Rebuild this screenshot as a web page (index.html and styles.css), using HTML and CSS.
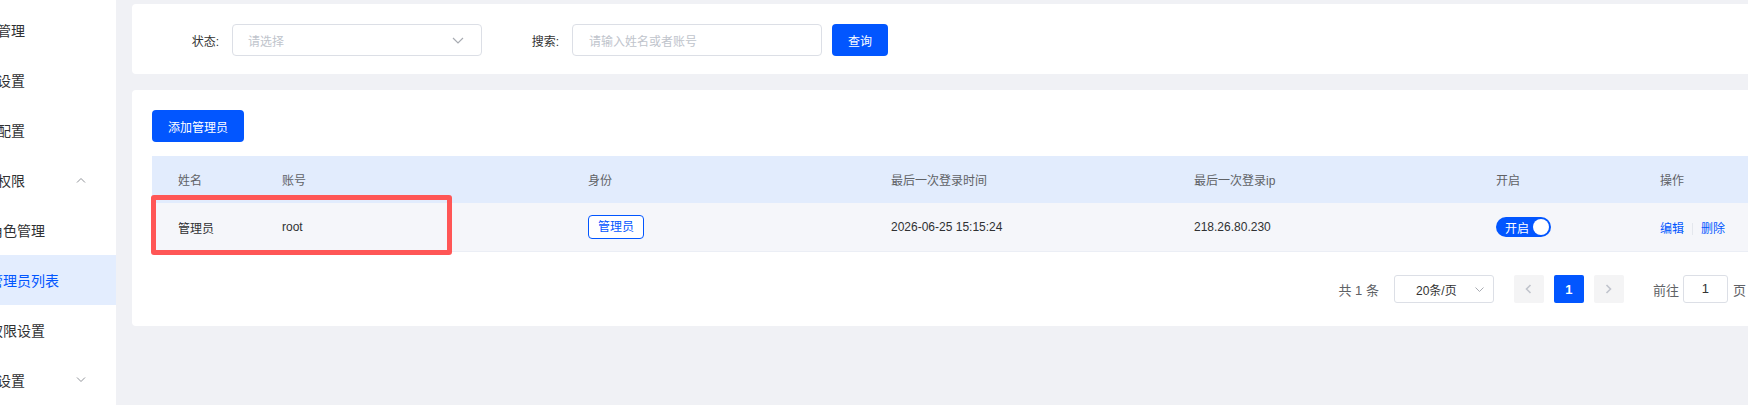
FILE: index.html
```html
<!DOCTYPE html>
<html lang="zh-CN">
<head>
  <meta charset="UTF-8" />
  <meta name="viewport" content="width=device-width, initial-scale=1.0"/>
  <title>管理员列表</title>
  <link rel="stylesheet" href="styles.css">
</head>
<body>
  <div class="layout">
    <aside class="sidebar">
      <ul class="menu">
        <li class="menu-item">会员管理</li>
        <li class="menu-item">系统设置</li>
        <li class="menu-item">支付配置</li>
        <li class="menu-item">
          <span>管理权限</span>
          <svg class="arrow" width="10" height="6" viewBox="0 0 10 6"><polyline points="1,5.5 5,1.5 9,5.5" fill="none" stroke="#909399" stroke-width="1"/></svg>
        </li>
        <li class="menu-item sub">角色管理</li>
        <li class="menu-item sub active">管理员列表</li>
        <li class="menu-item sub">权限设置</li>
        <li class="menu-item">
          <span>基础设置</span>
          <svg class="arrow" width="10" height="6" viewBox="0 0 10 6"><polyline points="1,0.5 5,4.5 9,0.5" fill="none" stroke="#909399" stroke-width="1"/></svg>
        </li>
      </ul>
    </aside>

    <main class="main">
      <!-- 搜索条件 -->
      <div class="card search-card">
        <div class="form-item">
          <label>状态:</label>
          <div class="select">
            <span class="placeholder">请选择</span>
            <svg width="12" height="7" viewBox="0 0 12 7"><polyline points="1,1 6,6 11,1" fill="none" stroke="#a8abb2" stroke-width="1.2"/></svg>
          </div>
        </div>
        <div class="form-item">
          <label>搜索:</label>
          <div class="input"><span class="placeholder">请输入姓名或者账号</span></div>
        </div>
        <button class="btn">查询</button>
      </div>

      <!-- 管理员列表 -->
      <div class="card list-card">
        <button class="btn">添加管理员</button>

        <div class="table-wrap">
          <table class="table">
            <colgroup>
              <col style="width: 104px">
              <col style="width: 306px">
              <col style="width: 303px">
              <col style="width: 303px">
              <col style="width: 302px">
              <col style="width: 164px">
              <col>
            </colgroup>
            <thead>
              <tr>
                <th>姓名</th>
                <th>账号</th>
                <th>身份</th>
                <th>最后一次登录时间</th>
                <th>最后一次登录ip</th>
                <th>开启</th>
                <th>操作</th>
              </tr>
            </thead>
            <tbody>
              <tr>
                <td>管理员</td>
                <td>root</td>
                <td><span class="tag">管理员</span></td>
                <td>2026-06-25 15:15:24</td>
                <td>218.26.80.230</td>
                <td><span class="switch">开启<i class="knob"></i></span></td>
                <td class="actions"><a>编辑</a><span class="divider"></span><a>删除</a></td>
              </tr>
            </tbody>
          </table>
          <div class="highlight"></div>
        </div>

        <div class="pagination">
          <span class="total">共 1 条</span>
          <div class="page-size">
            <span>20条/页</span>
            <svg width="9" height="5" viewBox="0 0 9 5"><polyline points="0.5,0.5 4.5,4.5 8.5,0.5" fill="none" stroke="#a8abb2" stroke-width="1"/></svg>
          </div>
          <span class="page-btn">
            <svg width="7" height="10" viewBox="0 0 7 10"><polyline points="5.5,1 1.5,5 5.5,9" fill="none" stroke="#c0c4cc" stroke-width="1.6"/></svg>
          </span>
          <span class="page-num">1</span>
          <span class="page-btn">
            <svg width="7" height="10" viewBox="0 0 7 10"><polyline points="1.5,1 5.5,5 1.5,9" fill="none" stroke="#c0c4cc" stroke-width="1.6"/></svg>
          </span>
          <span class="jump">前往</span>
          <span class="jump-input">1</span>
          <span class="jump-unit">页</span>
        </div>
      </div>
    </main>
  </div>
</body>
</html>
```

FILE: styles.css
```css
body {
  font-family: 'Liberation Sans', 'Noto Sans CJK SC', sans-serif;
  background: #f0f1f5;
  margin: 0;
  padding: 0;
  color: #333;
}
.layout {
  display: flex;
  height: 100vh;
  overflow: hidden;
}
.sidebar {
  flex: none;
  width: 116px;
  background: #fff;
  overflow: hidden;
}
.menu {
  list-style: none;
  margin: 5px 0 0 -51px;
  padding: 0;
  width: 167px;
}
.menu-item {
  display: flex;
  align-items: center;
  justify-content: space-between;
  height: 50px;
  padding: 0 30px 0 20px;
  font-size: 14px;
  color: #303133;
  white-space: nowrap;
}
.menu-item.sub {
  padding-left: 40px;
}
.menu-item.active {
  background: #e3edfe;
  color: #0256ff;
}
.main {
  flex: none;
  width: 1636px;
  margin-left: 16px;
  padding-top: 4px;
}
.card {
  background: #fff;
  border-radius: 4px;
  padding: 20px;
}
.search-card {
  display: flex;
  align-items: center;
  padding-bottom: 18px;
  margin-bottom: 16px;
}
.form-item {
  display: flex;
  align-items: center;
  margin-right: 10px;
}
.form-item label {
  width: 80px;
  padding-right: 13px;
  box-sizing: border-box;
  text-align: right;
  font-size: 12px;
  color: #333;
}
.select, .input {
  display: flex;
  align-items: center;
  justify-content: space-between;
  width: 250px;
  height: 32px;
  box-sizing: border-box;
  border: 1px solid #dcdfe6;
  border-radius: 4px;
  padding: 0 17px 0 15px;
  font-size: 12px;
}
.input {
  padding-left: 16px;
}
.placeholder {
  color: #c0c4cc;
}
.btn {
  height: 32px;
  padding: 0 16px;
  background: #0256ff;
  color: #fff;
  border: none;
  border-radius: 4px;
  font-family: inherit;
  font-size: 12px;
  cursor: pointer;
}
.list-card {
  padding-bottom: 23px;
}
.table-wrap {
  position: relative;
  margin-top: 14px;
}
.table {
  width: 100%;
  border-collapse: collapse;
  table-layout: fixed;
  font-size: 12px;
}
.table th {
  height: 47px;
  padding: 0 0 0 26px;
  background: #e2ecfd;
  color: #606266;
  font-weight: normal;
  text-align: left;
}
.table td {
  height: 48px;
  padding: 0 0 0 26px;
  background: #f5f6fa;
  border-bottom: 1px solid #ebeef5;
  color: #303133;
}
.tag {
  display: inline-block;
  height: 24px;
  line-height: 22px;
  box-sizing: border-box;
  padding: 0 9px;
  border: 1px solid #0256ff;
  border-radius: 4px;
  background: #fff;
  color: #0256ff;
  vertical-align: middle;
}
.switch {
  display: inline-flex;
  align-items: center;
  justify-content: space-between;
  width: 55px;
  height: 20px;
  box-sizing: border-box;
  padding: 0 2px 0 9px;
  border-radius: 10px;
  background: #0256ff;
  color: #fff;
  vertical-align: middle;
}
.knob {
  width: 16px;
  height: 16px;
  border-radius: 50%;
  background: #fff;
}
.actions {
  white-space: nowrap;
}
.actions a {
  color: #0256ff;
  cursor: pointer;
}
.divider {
  display: inline-block;
  width: 1px;
  height: 12px;
  margin: 0 8px;
  background: #e4e7ed;
  vertical-align: middle;
}
.highlight {
  position: absolute;
  left: -1px;
  top: 39px;
  width: 301px;
  height: 60px;
  box-sizing: border-box;
  border: 5px solid #ff5656;
  border-radius: 3px;
}
.pagination {
  display: flex;
  align-items: center;
  justify-content: flex-end;
  margin-top: 23px;
  font-size: 13px;
  color: #606266;
}
.total {
  margin-right: 15px;
}
.page-size {
  display: flex;
  align-items: center;
  justify-content: space-between;
  width: 100px;
  height: 28px;
  box-sizing: border-box;
  padding: 0 9px 0 21px;
  border: 1px solid #dcdfe6;
  border-radius: 3px;
  font-size: 12px;
  color: #333;
  margin-right: 20px;
}
.page-btn, .page-num {
  display: flex;
  align-items: center;
  justify-content: center;
  width: 30px;
  height: 28px;
  border-radius: 2px;
  background: #f4f4f5;
}
.page-num {
  margin: 0 10px;
  background: #0256ff;
  color: #fff;
  font-weight: bold;
}
.jump {
  margin-left: 29px;
  margin-right: 4px;
}
.jump-input {
  width: 45px;
  height: 28px;
  line-height: 26px;
  box-sizing: border-box;
  border: 1px solid #dcdfe6;
  border-radius: 3px;
  text-align: center;
  color: #333;
  margin-right: 5px;
}
.jump-unit {
  margin-right: 2px;
}
```
